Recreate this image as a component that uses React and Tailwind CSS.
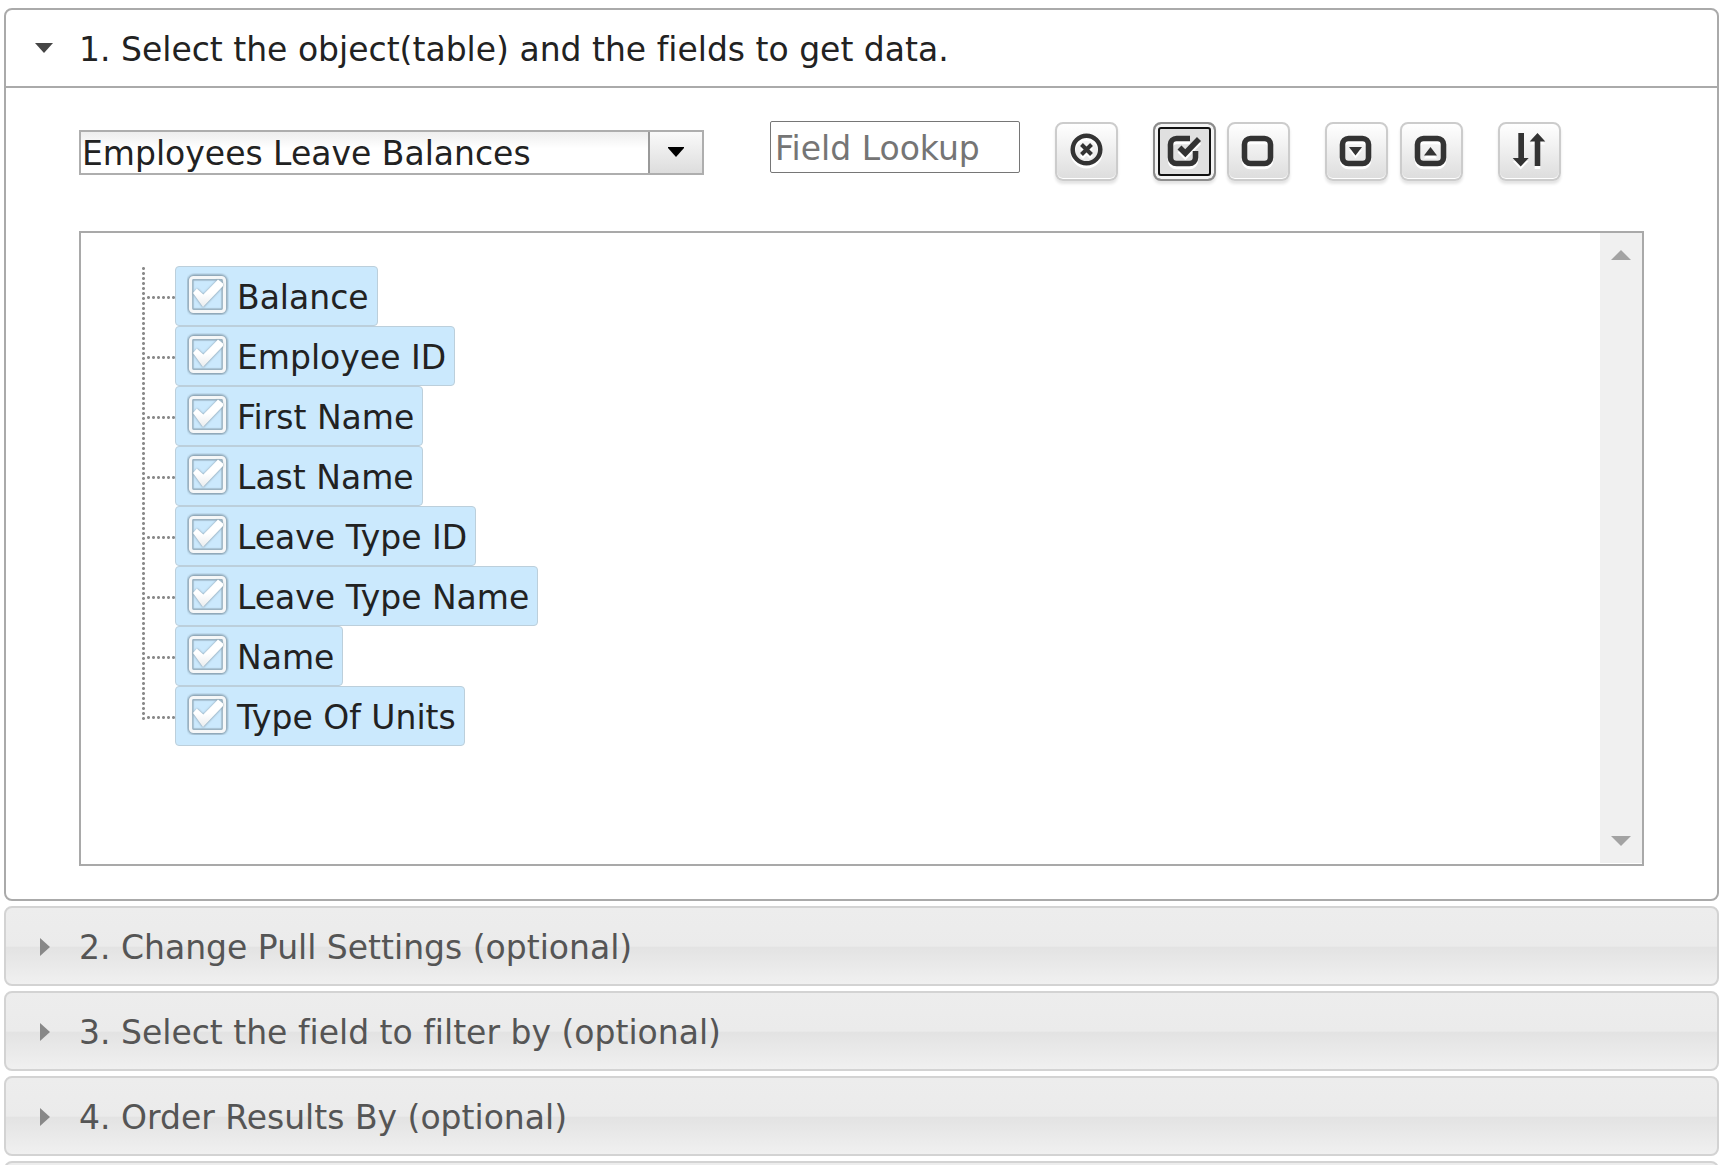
import { useState } from 'react';

const OBJECTS = ['Employees Leave Balances', 'Employees', 'Leave Types'];

const FIELDS = [
  'Balance',
  'Employee ID',
  'First Name',
  'Last Name',
  'Leave Type ID',
  'Leave Type Name',
  'Name',
  'Type Of Units',
];

const OPTIONAL_STEPS = [
  '2. Change Pull Settings (optional)',
  '3. Select the field to filter by (optional)',
  '4. Order Results By (optional)',
];

const BOX = 'M11.5 6.5h14a6 6 0 0 1 6 6v13a6 6 0 0 1-6 6h-14a6 6 0 0 1-6-6v-13a6 6 0 0 1 6-6z';

function ToolButton({ label, active, onClick, children }) {
  return (
    <button
      type="button"
      aria-label={label}
      aria-pressed={active}
      onClick={onClick}
      className={
        active
          ? 'flex h-[59px] w-[63px] items-center justify-center rounded-lg border-2 border-[#8c8c8c] bg-[#e0e0e0] shadow-[inset_0_0_0_3px_#f4f4f4,inset_0_0_0_5px_#111111,0_3px_3px_#e4e4e4]'
          : 'flex h-[59px] w-[63px] items-center justify-center rounded-lg border-2 border-[#cccccc] bg-linear-to-b from-white to-[#dddddd] shadow-[inset_0_-1px_0_#ffffff,0_3px_3px_#e4e4e4]'
      }
    >
      <svg
        viewBox="0 0 39 39"
        className="h-[39px] w-[39px] fill-none stroke-[#333333] stroke-[5.6] drop-shadow-[0_3px_0_#ffffff]"
      >
        {children}
      </svg>
    </button>
  );
}

function CheckMark({ checked }) {
  return (
    <svg viewBox="0 0 42 42" className="h-[42px] w-[42px] shrink-0" aria-hidden="true">
      <defs>
        <linearGradient id="tick" x1="0" y1="0" x2="0" y2="1">
          <stop offset="0.5" stopColor="#ffffff" />
          <stop offset="1" stopColor="#e9ecee" />
        </linearGradient>
        <filter id="soft" x="-20%" y="-20%" width="140%" height="140%">
          <feGaussianBlur stdDeviation="1.2" />
        </filter>
      </defs>
      <rect x="3" y="4" width="35" height="35" rx="4" fill="none" stroke="#8299a8" strokeWidth="5" filter="url(#soft)" />
      <rect x="5.500" y="6.500" width="30" height="30" fill="none" stroke="#9cb4c3" strokeWidth="2" />
      <rect x="3.500" y="4.500" width="34" height="34" rx="3" fill="none" stroke="#f5f7f8" strokeWidth="3.200" />
      {checked && (
        <>
          <path d="M6 20.500l4-5 6.300 6L31 6.500l5 4v3L16 34.500z" fill="#8299a8" filter="url(#soft)" />
          <path d="M6 20l3.800-4.500 6.500 6L31 6.500l5 4V13L16 34z" fill="url(#tick)" />
        </>
      )}
    </svg>
  );
}

function FieldNode({ name, checked, last, onToggle }) {
  return (
    <li className="flex h-[60px]">
      <span
        className={
          last
            ? 'h-[34px] w-[5px] bg-[radial-gradient(#8a8a8a_1px,transparent_2px)] bg-[length:5px_5px]'
            : 'h-full w-[5px] bg-[radial-gradient(#8a8a8a_1px,transparent_2px)] bg-[length:5px_5px]'
        }
      />
      <span className="mt-[29px] h-[5px] w-[29px] bg-[radial-gradient(#8a8a8a_1px,transparent_2px)] bg-[length:5px_5px]" />
      <label
        className={
          checked
            ? 'flex items-start rounded border border-[#bccfdb] bg-[#cbe9fd] pt-1.5 pr-2 pl-[11px]'
            : 'flex items-start rounded border border-transparent pt-1.5 pr-2 pl-[11px]'
        }
      >
        <input type="checkbox" className="sr-only" checked={checked} onChange={onToggle} />
        <CheckMark checked={checked} />
        <span className="ml-2 pt-1 leading-[42px]">{name}</span>
      </label>
    </li>
  );
}

export default function App() {
  const [source, setSource] = useState(OBJECTS[0]);
  const [lookup, setLookup] = useState('');
  const [selected, setSelected] = useState(FIELDS);
  const [filter, setFilter] = useState('all');
  const [descending, setDescending] = useState(false);

  const toggle = (name) => {
    setSelected((s) => (s.includes(name) ? s.filter((n) => n !== name) : [...s, name]));
  };

  const visible = FIELDS.filter((name) => {
    if (filter === 'checked' && !selected.includes(name)) return false;
    if (filter === 'unchecked' && selected.includes(name)) return false;
    return name.toLowerCase().includes(lookup.toLowerCase());
  });
  if (descending) visible.reverse();

  return (
    <main className="h-screen overflow-hidden bg-white pt-2 pr-1.5 pl-1 font-['Verdana','DejaVu_Sans',sans-serif] text-[33px] text-[#222222] [font-variant-ligatures:none]">
      <section className="rounded-lg border-2 border-[#aaaaaa]">
        <h2 className="flex h-[78px] border-b-2 border-[#aaaaaa]">
          <button type="button" aria-expanded="true" className="flex w-full items-center pl-7 text-left">
            <svg viewBox="0 0 20 12" className="mr-[25px] h-3 w-5 fill-[#454545]" aria-hidden="true">
              <path d="M1 1h18l-9 10z" />
            </svg>
            <span className="pt-1">1. Select the object(table) and the fields to get data.</span>
          </button>
        </h2>

        <div className="px-[73px] py-[33px]">
          <div className="mb-[50px] flex h-[60px] items-center">
            <div className="relative mt-0.5 mr-[66px]">
              <select
                aria-label="Object"
                value={source}
                onChange={(e) => setSource(e.target.value)}
                className="block h-[45px] w-[625px] appearance-none border-2 border-[#aeaeae] bg-linear-to-b from-[#eeeeee] to-white to-40% pt-0.5 pl-px leading-[39px]"
              >
                {OBJECTS.map((o) => (
                  <option key={o}>{o}</option>
                ))}
              </select>
              <span className="pointer-events-none absolute inset-y-0.5 right-0.5 flex w-[54px] items-center justify-center border-l-2 border-[#999999] bg-linear-to-b from-[#fafafa] to-[#dddddd]">
                <svg viewBox="0 0 18 12" className="h-3 w-[18px] fill-black" aria-hidden="true">
                  <path d="M1 1h16v1l-8 9-8-9z" />
                </svg>
              </span>
            </div>

            <input
              type="text"
              aria-label="Field Lookup"
              placeholder="Field Lookup"
              value={lookup}
              onChange={(e) => setLookup(e.target.value)}
              className="mr-[35px] h-[52px] w-[250px] self-start rounded-xs border border-[#767676] pt-0.5 pl-1 placeholder:text-[#757575]"
            />

            <div className="flex gap-[35px] self-end">
              <ToolButton label="Clear lookup" onClick={() => setLookup('')}>
                <circle cx="19.500" cy="17.500" r="13.800" className="stroke-[4.5]" />
                <path d="M14.500 12.500l10 10M24.500 12.500l-10 10" className="stroke-4" />
              </ToolButton>
              <div className="flex gap-[11px]">
                <ToolButton label="Select all" active onClick={() => setSelected(FIELDS)}>
                  <path d="M25 6.500H11.500a6 6 0 0 0-6 6v13a6 6 0 0 0 6 6h13a6 6 0 0 0 6-6V19" />
                  <path d="M14.500 15.500l5.800 5.800L34 7" />
                </ToolButton>
                <ToolButton label="Deselect all" onClick={() => setSelected([])}>
                  <path d={BOX} />
                </ToolButton>
              </div>
              <div className="flex gap-3">
                <ToolButton label="Show selected" onClick={() => setFilter(filter === 'checked' ? 'all' : 'checked')}>
                  <path d={BOX} />
                  <path d="M12 15h13l-6.500 8.500z" className="fill-[#333333] stroke-none" />
                </ToolButton>
                <ToolButton label="Show unselected" onClick={() => setFilter(filter === 'unchecked' ? 'all' : 'unchecked')}>
                  <path d={BOX} />
                  <path d="M12 23.500h13L18.500 15z" className="fill-[#333333] stroke-none" />
                </ToolButton>
              </div>
              <ToolButton label="Sort fields" onClick={() => setDescending(!descending)}>
                <path
                  d="M8.300 1H14v25h4.700l-8 8.500-8-8.500h5.600zM27.500 1l7.800 8.500h-5V34h-5.600V9.500h-5z"
                  className="fill-[#333333] stroke-none"
                />
              </ToolButton>
            </div>
          </div>

          <div className="flex h-[635px] border-2 border-[#a9a9a9]">
            <ul className="flex-1 overflow-hidden pt-[33px] pl-[60px]">
              {visible.map((name, i) => (
                <FieldNode
                  key={name}
                  name={name}
                  checked={selected.includes(name)}
                  last={i === visible.length - 1}
                  onToggle={() => toggle(name)}
                />
              ))}
            </ul>
            <div className="mb-px flex w-[42px] flex-col justify-between bg-[#f0f0f0]">
              <button type="button" aria-label="Scroll up" className="flex h-11 items-center justify-center">
                <svg viewBox="0 0 20 10" className="h-2.5 w-5 fill-[#a3a3a3]">
                  <path d="M0 10h20L10 0z" />
                </svg>
              </button>
              <button type="button" aria-label="Scroll down" className="flex h-11 items-center justify-center">
                <svg viewBox="0 0 20 10" className="h-2.5 w-5 fill-[#a3a3a3]">
                  <path d="M0 0h20L10 10z" />
                </svg>
              </button>
            </div>
          </div>
        </div>
      </section>

      {OPTIONAL_STEPS.map((title) => (
        <h2 key={title} className="mt-[5px]">
          <button
            type="button"
            aria-expanded="false"
            className="flex h-20 w-full items-center rounded-lg border-2 border-[#d3d3d3] bg-[linear-gradient(#ededed,#ebebeb_50%,#e3e3e3_52%,#f0f0f0)] pl-[33px] text-left text-[#555555]"
          >
            <svg viewBox="0 0 12 20" className="mr-7 h-5 w-3 fill-[#888888]" aria-hidden="true">
              <path d="M1 2l10 9-10 9z" />
            </svg>
            <span className="pt-1">{title}</span>
          </button>
        </h2>
      ))}
      <div className="mt-[5px] h-20 rounded-lg border-2 border-[#d3d3d3] bg-[#ededed]" />
    </main>
  );
}
